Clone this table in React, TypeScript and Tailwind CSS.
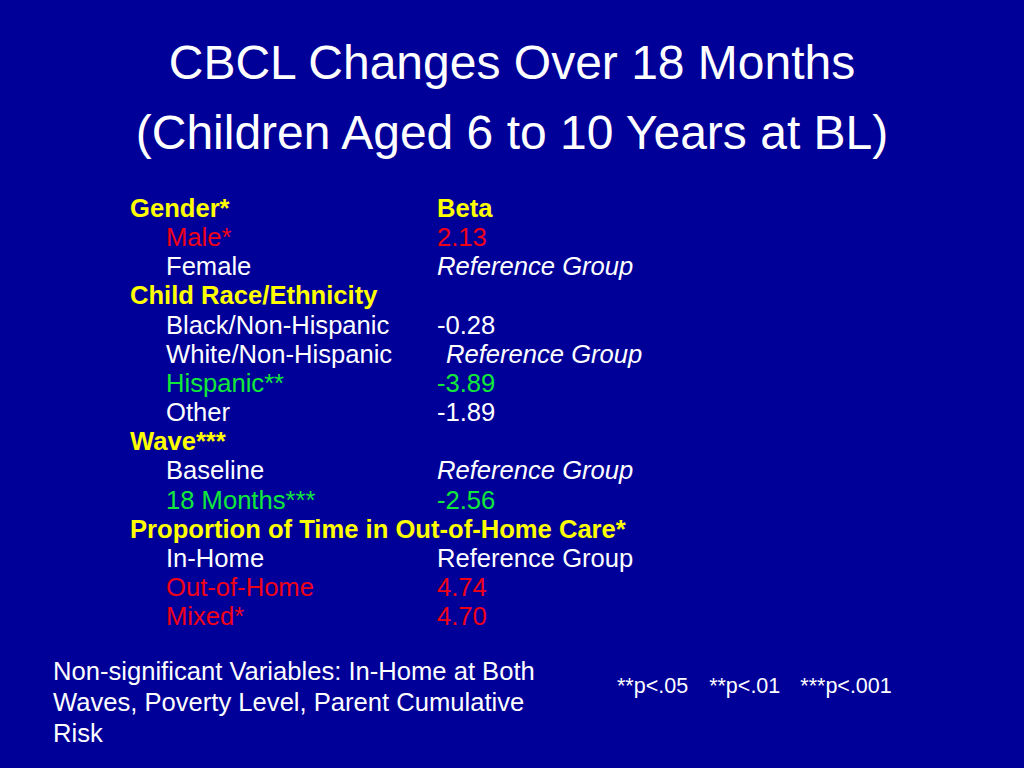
const rows: { label: string; value: string; kind: 'head' | 'item'; color?: string; italic?: boolean; shift?: boolean }[] = [
  { label: 'Gender*', value: 'Beta', kind: 'head' },
  { label: 'Male*', value: '2.13', kind: 'item', color: 'text-[#f00018]' },
  { label: 'Female', value: 'Reference Group', kind: 'item', italic: true },
  { label: 'Child Race/Ethnicity', value: '', kind: 'head' },
  { label: 'Black/Non-Hispanic', value: '-0.28', kind: 'item' },
  { label: 'White/Non-Hispanic', value: 'Reference Group', kind: 'item', italic: true, shift: true },
  { label: 'Hispanic**', value: '-3.89', kind: 'item', color: 'text-[#11e83a]' },
  { label: 'Other', value: '-1.89', kind: 'item' },
  { label: 'Wave***', value: '', kind: 'head' },
  { label: 'Baseline', value: 'Reference Group', kind: 'item', italic: true },
  { label: '18 Months***', value: '-2.56', kind: 'item', color: 'text-[#11e83a]' },
  { label: 'Proportion of Time in Out-of-Home Care*', value: '', kind: 'head' },
  { label: 'In-Home', value: 'Reference Group', kind: 'item' },
  { label: 'Out-of-Home', value: '4.74', kind: 'item', color: 'text-[#f00018]' },
  { label: 'Mixed*', value: '4.70', kind: 'item', color: 'text-[#f00018]' },
];

export default function App() {
  return (
    <div className="w-[1024px] h-[768px] bg-[#000099] text-white overflow-hidden font-['Liberation_Sans',Arial,sans-serif]">
      {/* Title */}
      <div className="pt-[28px] text-center text-[48px] leading-[70px]">
        <div>CBCL Changes Over 18 Months</div>
        <div>(Children Aged 6 to 10 Years at BL)</div>
      </div>

      {/* Coefficient table */}
      <div className="mt-[26px] pl-[130px] text-[25.6px] leading-[29.15px]">
        {rows.map((r, i) =>
          r.kind === 'head' ? (
            <div key={i} className="flex font-bold text-[#ffff00]">
              <div className="w-[307px] shrink-0 whitespace-nowrap">{r.label}</div>
              <div>{r.value}</div>
            </div>
          ) : (
            <div key={i} className={`flex ${r.color ?? 'text-white'}`}>
              <div className="w-[307px] shrink-0 pl-[36px] whitespace-nowrap">{r.label}</div>
              <div className={`whitespace-nowrap ${r.italic ? 'italic' : ''} ${r.shift ? 'pl-[9px]' : ''}`}>{r.value}</div>
            </div>
          )
        )}
      </div>

      {/* Footer */}
      <div className="mt-[25px] flex items-start">
        <div className="ml-[53px] w-[500px] text-[25.6px] leading-[31px]">
          Non-significant Variables: In-Home at Both Waves, Poverty Level, Parent Cumulative Risk
        </div>
        <div className="ml-[64px] mt-[15px] flex text-[21.5px] leading-[31px] whitespace-nowrap">
          <span>**p&lt;.05</span>
          <span className="ml-[21px]">**p&lt;.01</span>
          <span className="ml-[20px]">***p&lt;.001</span>
        </div>
      </div>
    </div>
  );
}
